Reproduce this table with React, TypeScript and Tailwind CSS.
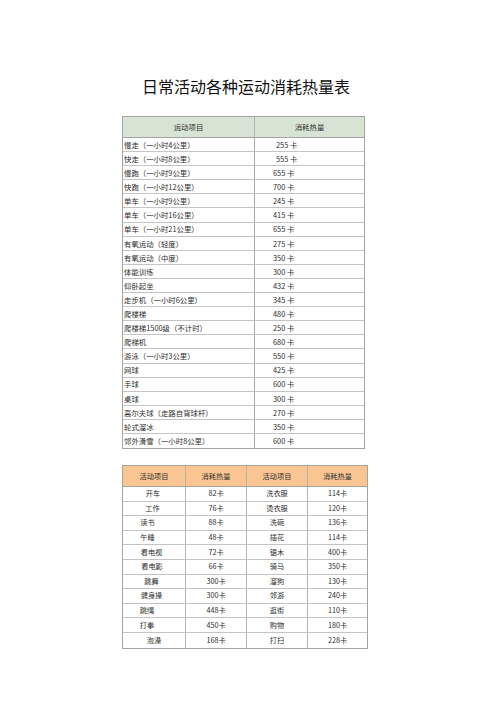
const font = { fontFamily: '"Noto Sans CJK SC", "Noto Sans", sans-serif' };

const sports: [string, string][] = [
  ['慢走（一小时4公里）', '255 卡'],
  ['快走（一小时8公里）', '555 卡'],
  ['慢跑（一小时9公里）', '655 卡'],
  ['快跑（一小时12公里）', '700 卡'],
  ['单车（一小时9公里）', '245 卡'],
  ['单车（一小时16公里）', '415 卡'],
  ['单车（一小时21公里）', '655 卡'],
  ['有氧运动（轻度）', '275 卡'],
  ['有氧运动（中度）', '350 卡'],
  ['体能训练', '300 卡'],
  ['仰卧起坐', '432 卡'],
  ['走步机（一小时6公里）', '345 卡'],
  ['爬楼梯', '480 卡'],
  ['爬楼梯1500级（不计时）', '250 卡'],
  ['爬梯机', '680 卡'],
  ['游泳（一小时3公里）', '550 卡'],
  ['网球', '425 卡'],
  ['手球', '600 卡'],
  ['桌球', '300 卡'],
  ['高尔夫球（走路自背球杆）', '270 卡'],
  ['轮式溜冰', '350 卡'],
  ['郊外滑雪（一小时8公里）', '600 卡'],
];

const daily: [string, string, string, string][] = [
  ['开车', '82卡', '洗衣服', '114卡'],
  ['工作', '76卡', '烫衣服', '120卡'],
  ['读书', '88卡', '洗碗', '136卡'],
  ['午睡', '48卡', '插花', '114卡'],
  ['看电视', '72卡', '锯木', '400卡'],
  ['看电影', '66卡', '骑马', '350卡'],
  ['跳舞', '300卡', '溜狗', '130卡'],
  ['健身操', '300卡', '郊游', '240卡'],
  ['跳绳', '448卡', '逛街', '110卡'],
  ['打拳', '450卡', '购物', '180卡'],
  ['泡澡', '168卡', '打扫', '228卡'],
];

// the scan's first column isn't quite centred; nudge each name left a bit
const nameShift = [
  'pr-[2px]', 'pr-[3px]', 'pr-[13px]', 'pr-[13px]', 'pr-[5px]', 'pr-[4px]',
  'pr-[5px]', 'pr-[5px]', 'pr-[14px]', 'pr-[14px]', 'pr-0',
];

function SportsTable() {
  return (
    <div className="w-[243px] border border-[#a3a3a3] text-[7.4px] text-[#2e2e2e]">
      <div className="grid h-[21px] grid-cols-[132px_1fr] items-center bg-[#d7e3d3] border-b border-[#a3a3a3]">
        <div className="h-full flex items-center justify-center border-r border-[#b5b5b5]">运动项目</div>
        <div className="text-center">消耗热量</div>
      </div>
      {sports.map(([name, kcal], i) => (
        <div
          key={name}
          className="grid h-[14.1px] grid-cols-[132px_1fr] border-b border-[#c4c4c4] last:border-b-0"
        >
          <div className="flex items-center pl-[1px] border-r border-[#a8a8a8] leading-none">{name}</div>
          <div className={`flex items-center leading-none ${i < 2 ? 'pl-[21px]' : 'pl-[18px]'}`}>{kcal}</div>
        </div>
      ))}
    </div>
  );
}

function DailyTable() {
  return (
    <div className="w-[246px] border border-[#a3a3a3] text-[7.2px] text-[#2e2e2e]">
      <div className="grid h-[21px] grid-cols-[63px_61px_61px_1fr] bg-[#f9c693] border-b border-[#a3a3a3]">
        {['活动项目', '消耗热量', '活动项目', '消耗热量'].map((h, i) => (
          <div key={i} className="flex items-center justify-center border-r border-[#b3b3b3] last:border-r-0">
            {h}
          </div>
        ))}
      </div>
      {daily.map((row, r) => (
        <div
          key={r}
          className="grid h-[14.6px] grid-cols-[63px_61px_61px_1fr] border-b border-[#c4c4c4] last:border-b-0"
        >
          {row.map((c, i) => (
            <div
              key={i}
              className={`flex items-center justify-center leading-none border-r border-[#b3b3b3] last:border-r-0 ${i === 0 ? nameShift[r] : ''}`}
            >
              {c}
            </div>
          ))}
        </div>
      ))}
    </div>
  );
}

export default function App() {
  return (
    <div className="w-[500px] h-[708px] bg-white" style={font}>
      <div className="pt-[75px] pl-[142px] text-[16px] leading-[22px] text-[#111]">日常活动各种运动消耗热量表</div>
      <div className="mt-[19px] ml-[122px]">
        <SportsTable />
      </div>
      <div className="mt-[16px] ml-[122px]">
        <DailyTable />
      </div>
    </div>
  );
}
